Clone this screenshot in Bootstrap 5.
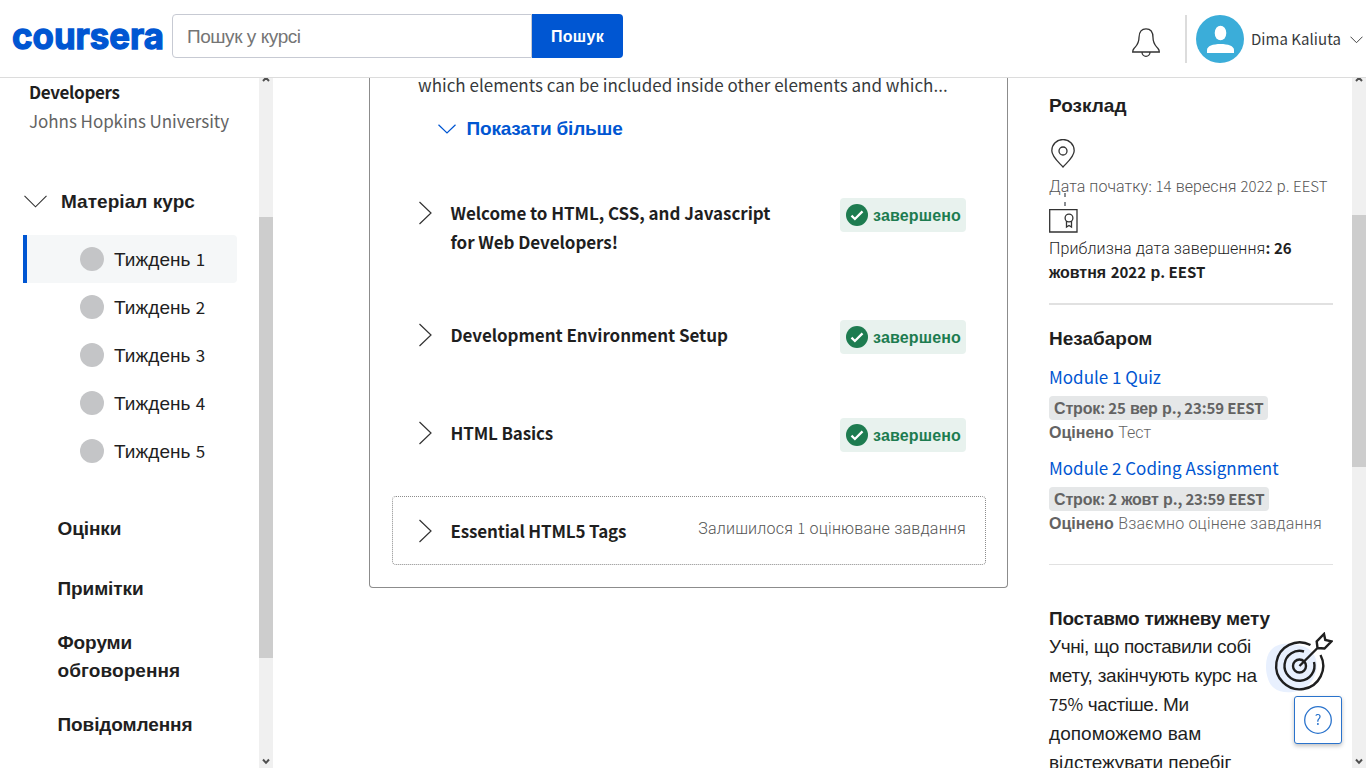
<!DOCTYPE html>
<html lang="uk">
<head>
<meta charset="utf-8">
<meta name="viewport" content="width=device-width, initial-scale=1">
<title>Coursera</title>
<link href="https://cdn.jsdelivr.net/npm/bootstrap@5.3.0/dist/css/bootstrap.min.css" rel="stylesheet">
<style>
:root{--blue:#0056d2;--ink:#1f1f1f;--muted:#636363}
body{font-family:"Liberation Sans",Arial,sans-serif;color:var(--ink);height:100vh;overflow:hidden;background:#fff;white-space:nowrap}
svg{display:block;flex:none}
.lat{font-family:"Noto Sans CJK SC",sans-serif;font-size:17px;line-height:0}
.thin{font-family:Roboto,sans-serif;font-weight:300;font-size:16px}
.topbar{height:78px;border-bottom:1px solid #dcdcdc;padding-left:11px}
.search{width:451px;height:44px;margin:14px 0 0 7px}
.search .form-control{border:1px solid #c7cad3;border-radius:4px 0 0 4px;padding:2px 14px 0;font-size:19px;letter-spacing:-.45px;color:#1f1f1f}
.search .form-control::placeholder{color:#757575;opacity:1}
.search .btn{width:91px;flex:none;background:var(--blue);border:0;border-radius:0 4px 4px 0;font-size:16px;font-weight:700;letter-spacing:.3px;color:#fff;padding:2px 0 0}
.divider{width:2px;height:48px;background:#dcdcdc;margin:15px 9px 0 25px}
.avatar{margin-top:15px}
.uname{font-size:15px;line-height:22px;color:#373a3c;margin:28px 9px 0 7px;letter-spacing:.05px}
.page{height:690px}
.side{width:259px}
.track{width:14px;background:#f0f0f0;flex:none}
.thumb{background:#cdcdcd}
.line29{line-height:29px}
.mat{height:28px;line-height:28px;margin:52px 0 20px 24px;font-size:19px;font-weight:700;letter-spacing:.05px}
.mat span{padding-top:1px}
.week{height:48px;margin:0 22px 0 23px;padding-left:53px;border-left:4px solid transparent;font-size:19px;letter-spacing:.05px}
.week.active{background:#f5f7f8;border-left-color:var(--blue);border-radius:0 4px 4px 0}
.week>span{padding-top:2px}
.dot{width:24px;height:24px;background:#c4c5c7;margin-right:10px}
.navi{font-size:19px;font-weight:700;line-height:28px;letter-spacing:-.1px;color:var(--ink);text-decoration:none;margin-left:57.500px;display:block}
.mod-card{width:639px;height:510px;margin-left:96px;border:1px solid #8c8c8c;border-top:0;border-radius:0 0 4px 4px;overflow:hidden}
.intro{line-height:29px;margin:-8px 0 0 48px;letter-spacing:.01px;color:#373a3c}
.more{color:var(--blue);font-size:19px;font-weight:700;line-height:28px;letter-spacing:-.18px;margin:16px 0 35px 67.500px}
.mod{width:594px;height:98px;margin-left:22px;padding:19px 19px 0 24px;border:1px solid transparent;color:var(--ink)}
.mod.tall{height:122px}
.mod.current{height:69px;border:1px dotted #8c8c8c;border-radius:4px}
.mod h3{font-family:"Noto Sans CJK SC",sans-serif;font-size:17px;font-weight:700;line-height:29px;letter-spacing:-.06px;margin:0;white-space:normal;width:340px}
.done{width:126px;height:34px;background:#e8f2ee;color:#1d7c50;border-radius:4px;font-size:16px;font-weight:700;letter-spacing:.15px;padding-left:6px}
.done svg{margin-right:5px}
.done span{padding-top:1px}
.chev{margin:3px 19px 0 .5px}
.right{width:284px;margin-left:41px}
.ttl{font-size:19px;font-weight:700;line-height:28px;letter-spacing:0;margin:0}
.l24{line-height:24px}
.due{height:24px;line-height:25px;border-radius:4px;background:#e5e7e8;color:var(--muted);font-weight:700;font-size:16px;padding:0 5px;width:max-content;letter-spacing:-.15px}
.due .lat,.date .lat{font-size:15px}
.mlink{color:var(--blue);text-decoration:none;line-height:28px;display:block}
.dash{position:absolute;left:15px;top:-16px;width:2px;height:14px;background:repeating-linear-gradient(#8a8d91 0 4px,transparent 4px 9px)}
.goal{font-size:19px;line-height:28.8px;letter-spacing:-.24px}
.bull{position:absolute;right:0;top:27px}
.helpbtn{position:fixed;left:1294px;top:696px;width:48px;height:48px;background:#fff;border:1px solid #2a73cc;border-radius:3px;box-shadow:0 2px 4px rgba(0,0,0,.25);padding:0}
</style>
</head>
<body>
<header class="topbar d-flex align-items-start">
  <svg width="154" height="50" style="margin-top:12px;overflow:visible"><text x="1" y="37" font-family="Inter,sans-serif" font-weight="700" font-size="36" textLength="152" lengthAdjust="spacingAndGlyphs" fill="#0056d2" stroke="#0056d2" stroke-width="1.300">coursera</text></svg>
  <form class="search d-flex"><input class="form-control" placeholder="Пошук у курсі"><button type="button" class="btn">Пошук</button></form>
  <svg class="ms-auto" width="28" height="30" viewBox="0 0 28 30" fill="none" stroke="#333" stroke-width="1.3" style="margin-top:28px"><path d="M7 9.500C7 3.500 10 .8 14 .8S21 3.500 21 9.500C21 16 23.500 17.500 26 20.500Q27.300 22 27.300 24H.7Q.7 22 2 20.500C4.500 17.500 7 16 7 9.500ZM10 24.300a4 4 0 0 0 8 0"/></svg>
  <div class="divider"></div>
  <svg class="avatar" width="48" height="48"><circle cx="24" cy="24" r="24" fill="#3badd9"/><ellipse cx="24.500" cy="18" rx="5.800" ry="7.300" fill="#fff"/><path d="M11 38v-3c0-4 6-6 13.500-6S38 31 38 35v3Z" fill="#fff"/></svg>
  <span class="lat uname">Dima Kaliuta</span>
  <svg width="13" height="8" viewBox="0 0 13 8" fill="none" stroke="#444" style="margin:36px 3px 0 0"><path d="M.5.7l6 6 6-6"/></svg>
</header>
<main class="page d-flex">
  <nav class="side">
    <div class="lat fw-bold line29" style="margin:-1px 0 0 29px;letter-spacing:-.35px">Developers</div>
    <div class="lat line29" style="margin-left:29px;color:#636363;letter-spacing:-.05px">Johns Hopkins University</div>
    <div class="mat d-flex align-items-center"><svg width="23" height="13" fill="none" stroke="#333" stroke-width="1.100" style="margin-right:14px"><path d="M.5.8L11.500 11.800 22.500.8"/></svg><span>Матеріал курс</span></div>
    <div class="week active d-flex align-items-center"><i class="dot rounded-circle"></i><span>Тиждень <span class="lat">1</span></span></div>
    <div class="week d-flex align-items-center"><i class="dot rounded-circle"></i><span>Тиждень <span class="lat">2</span></span></div>
    <div class="week d-flex align-items-center"><i class="dot rounded-circle"></i><span>Тиждень <span class="lat">3</span></span></div>
    <div class="week d-flex align-items-center"><i class="dot rounded-circle"></i><span>Тиждень <span class="lat">4</span></span></div>
    <div class="week d-flex align-items-center"><i class="dot rounded-circle"></i><span>Тиждень <span class="lat">5</span></span></div>
    <a class="navi" style="margin-top:40px">Оцінки</a>
    <a class="navi" style="margin-top:32px">Примітки</a>
    <a class="navi" style="margin-top:26px">Форуми<br><span style="letter-spacing:.08px">обговорення</span></a>
    <a class="navi" style="margin-top:26px">Повідомлення</a>
  </nav>
  <div class="track d-flex flex-column align-items-center">
    <svg width="8" height="4" fill="none" stroke="#505050" stroke-width="2"><path d="M1 3L4-.2 7 3"/></svg>
    <div class="thumb w-100" style="margin-top:135px;height:441px"></div>
    <svg class="mt-auto" width="8" height="10" fill="none" stroke="#505050" stroke-width="2"><path d="M1 1.500L4 4.800 7 1.500"/></svg>
  </div>
  <section class="mod-card flex-shrink-0">
    <div class="lat intro">which elements can be included inside other elements and which...</div>
    <div class="more d-flex align-items-center"><svg width="18" height="10" fill="none" stroke="#0056d2" stroke-width="1.200" style="margin-right:11px"><path d="M.5.7l8.500 8.300L17.500.7"/></svg>Показати більше</div>
    <div class="mod tall d-flex"><svg class="chev" width="14" height="24" fill="none" stroke="#333" stroke-width="1.200"><path d="M1.500 1L13 12 1.500 23"/></svg><h3>Welcome to HTML, CSS, and Javascript for Web Developers!</h3><div class="done d-flex align-items-center ms-auto"><svg width="22" height="22"><circle cx="11" cy="11" r="11" fill="#1d7c50"/><path d="M5.500 11.700l3.400 3.300 7.600-7.600" fill="none" stroke="#fff" stroke-width="2.300"/></svg><span>завершено</span></div></div>
    <div class="mod d-flex"><svg class="chev" width="14" height="24" fill="none" stroke="#333" stroke-width="1.200"><path d="M1.500 1L13 12 1.500 23"/></svg><h3>Development Environment Setup</h3><div class="done d-flex align-items-center ms-auto"><svg width="22" height="22"><circle cx="11" cy="11" r="11" fill="#1d7c50"/><path d="M5.500 11.700l3.400 3.300 7.600-7.600" fill="none" stroke="#fff" stroke-width="2.300"/></svg><span>завершено</span></div></div>
    <div class="mod d-flex"><svg class="chev" width="14" height="24" fill="none" stroke="#333" stroke-width="1.200"><path d="M1.500 1L13 12 1.500 23"/></svg><h3 style="letter-spacing:-.15px">HTML Basics</h3><div class="done d-flex align-items-center ms-auto"><svg width="22" height="22"><circle cx="11" cy="11" r="11" fill="#1d7c50"/><path d="M5.500 11.700l3.400 3.300 7.600-7.600" fill="none" stroke="#fff" stroke-width="2.300"/></svg><span>завершено</span></div></div>
    <div class="mod current d-flex"><svg class="chev" width="14" height="24" fill="none" stroke="#333" stroke-width="1.200"><path d="M1.500 1L13 12 1.500 23"/></svg><h3 class="w-auto" style="letter-spacing:-.18px">Essential HTML5 Tags</h3><div class="thin l24 ms-auto" style="letter-spacing:.22px;color:#555;padding-top:1px">Залишилося <span class="lat" style="font-size:15px">1</span> оцінюване завдання</div></div>
  </section>
  <aside class="right">
    <h2 class="ttl" style="margin-top:14px">Розклад</h2>
    <svg width="24" height="29" fill="none" stroke="#333" stroke-width="1.300" style="margin:19px 0 0 2px"><path d="M12 28C7 22.500.8 17.500.8 11.700a11.200 11.200 0 0 1 22.400 0C23.200 17.500 17 22.500 12 28Z"/><circle cx="12" cy="12" r="4"/></svg>
    <div class="thin l24 date" style="margin-top:7px;color:#555;letter-spacing:.07px">Дата початку<span class="lat">: 14</span> вересня <span class="lat">2022</span> р<span class="lat">. EEST</span></div>
    <div class="position-relative" style="margin-top:10px"><i class="dash"></i><svg width="29" height="24" fill="none" stroke="#333" stroke-width="1.300"><path d="M.7.7h27.300v22.300H.7Z"/><circle cx="20" cy="9" r="3.900"/><path d="M17.500 12v6l2.500-1.500 2.500 1.500v-6"/></svg></div>
    <div class="thin l24 date" style="margin-top:4px;color:#1f1f1f;letter-spacing:.11px">Приблизна дата завершення<span class="lat fw-bold">: 26</span></div>
    <div class="l24 fw-bold date">жовтня <span class="lat">2022</span> р<span class="lat">. EEST</span></div>
    <div style="height:2px;background:#e1e1e1;margin-top:18px"></div>
    <h2 class="ttl" style="margin-top:20px">Незабаром</h2>
    <a class="lat mlink" style="margin-top:10px">Module 1 Quiz</a>
    <div class="due" style="margin-top:5px">Строк<span class="lat">: 25</span> вер р<span class="lat">., 23:59 EEST</span></div>
    <div class="l24" style="color:#636363;padding-top:1px"><b>Оцінено</b> <span class="thin">Тест</span></div>
    <a class="lat mlink" style="margin-top:9px">Module 2 Coding Assignment</a>
    <div class="due" style="margin-top:5px">Строк<span class="lat">: 2</span> жовт р<span class="lat">., 23:59 EEST</span></div>
    <div class="l24" style="color:#636363;padding-top:1px"><b>Оцінено</b> <span class="thin" style="letter-spacing:.2px">Взаємно оцінене завдання</span></div>
    <div style="height:1px;background:#e1e1e1;margin-top:28px"></div>
    <div class="goal position-relative" style="margin-top:39.600px"><b>Поставмо тижневу мету</b><br><span style="letter-spacing:-.4px">Учні, що поставили собі</span><br>мету, закінчують курс на<br><span class="lat">75%</span> <span style="letter-spacing:-.45px">частіше. Ми</span><br><span style="letter-spacing:.05px">допоможемо вам</span><br><span style="letter-spacing:-.12px">відстежувати перебіг</span>
      <svg class="bull" width="67" height="62" fill="none" stroke="#1f1f1f" stroke-width="2.400"><path d="M5 18C12 10 24 11 36 14c14 3 19 20 11 33-8 14-29 17-39 9C-1 49-3 27 5 18Z" fill="#e8f0fe" stroke="none"/><path d="M44.500 13A23.500 23.500 0 1 0 54.500 23"/><path d="M38 19.500A15 15 0 1 0 48 30"/><circle cx="33.500" cy="34" r="6.500"/><path d="M33.500 34L52 15.500M51.500 16l-.8-6.500L58 2l1.300 6 6.200 1.300-7 7.200Z"/></svg>
    </div>
  </aside>
  <div class="track d-flex flex-column align-items-center ms-auto">
    <svg width="8" height="4" fill="none" stroke="#505050" stroke-width="2"><path d="M1 3L4-.2 7 3"/></svg>
    <div class="thumb w-100" style="margin-top:133px;height:252px"></div>
    <svg class="mt-auto" width="8" height="10" fill="none" stroke="#505050" stroke-width="2"><path d="M1 1.500L4 4.800 7 1.500"/></svg>
  </div>
</main>
<button class="helpbtn d-flex align-items-center justify-content-center"><svg width="28" height="28"><circle cx="14" cy="14" r="13.300" fill="none" stroke="#2a73cc" stroke-width="1.300"/><text x="14" y="19" text-anchor="middle" font-family="Noto Sans CJK SC" font-size="14" fill="#2a73cc">?</text></svg></button>
<script src="https://cdn.jsdelivr.net/npm/bootstrap@5.3.0/dist/js/bootstrap.bundle.min.js"></script>
</body>
</html>
